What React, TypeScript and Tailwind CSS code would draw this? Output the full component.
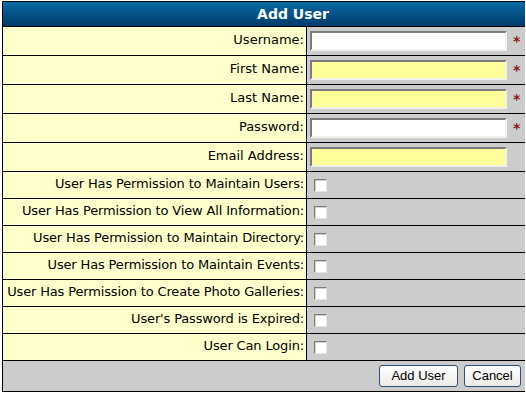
import React from 'react';

const textFields = [
  { label: 'Username:', yellow: false, required: true },
  { label: 'First Name:', yellow: true, required: true },
  { label: 'Last Name:', yellow: true, required: true },
  { label: 'Password:', yellow: false, required: true },
  { label: 'Email Address:', yellow: true, required: false },
];

const checkFields = [
  'User Has Permission to Maintain Users:',
  'User Has Permission to View All Information:',
  'User Has Permission to Maintain Directory:',
  'User Has Permission to Maintain Events:',
  'User Has Permission to Create Photo Galleries:',
  "User's Password is Expired:",
  'User Can Login:',
];

const App: React.FC = () => {
  return (
    <div className="w-[526px] h-[395px] bg-white pt-px pl-[2px] font-['DejaVu_Sans',sans-serif] text-[13px] text-black">
      <div className="w-[523px] grid grid-cols-[303px_218px] gap-px bg-black border border-black">
        {/* title */}
        <div className="col-span-2 h-[24px] flex items-center justify-center pl-[58px] bg-gradient-to-b from-[#0b6ba3] to-[#003b6b] text-white font-bold text-[14px]">
          Add User
        </div>

        {textFields.map((f) => (
          <React.Fragment key={f.label}>
            <div className="h-[28px] bg-[#ffffcc] flex items-center justify-end pr-[2px] pb-[3px] whitespace-nowrap">
              {f.label}
            </div>
            <div className="h-[28px] bg-[#cccccc] flex items-center pl-[3px]">
              <input
                type="text"
                className={`w-[197px] h-[20px] border-2 border-t-[#7b7b7b] border-l-[#7b7b7b] border-b-[#f2f2ec] border-r-[#f2f2ec] outline-none ${f.yellow ? 'bg-[#ffff99]' : 'bg-white'}`}
              />
              {f.required && (
                <span className="ml-[6px] text-[#8b1a1a] font-bold text-[14px] leading-none">*</span>
              )}
            </div>
          </React.Fragment>
        ))}

        {checkFields.map((label) => (
          <React.Fragment key={label}>
            <div className="h-[26px] bg-[#ffffcc] flex items-center justify-end pr-[2px] pb-[2px] whitespace-nowrap tracking-[-0.15px]">
              {label}
            </div>
            <div className="h-[26px] bg-[#cccccc] flex items-center pl-[7px]">
              <span className="block w-[13px] h-[13px] bg-white border border-t-[#7b7b7b] border-l-[#7b7b7b] border-b-[#e6e6e0] border-r-[#e6e6e0] shadow-[inset_1px_1px_0_#d4d0c8]" />
            </div>
          </React.Fragment>
        ))}

        <div className="col-span-2 h-[30px] bg-[#cccccc] flex items-center justify-end gap-[6px] pr-[4px] font-['Liberation_Sans',Arial,sans-serif] text-[13px]">
          <button className="w-[79px] h-[22px] rounded-[3px] border border-[#2c4f7c] bg-gradient-to-b from-white to-[#ecebe6]">
            Add User
          </button>
          <button className="w-[57px] h-[22px] rounded-[3px] border border-[#2c4f7c] bg-gradient-to-b from-white to-[#ecebe6]">
            Cancel
          </button>
        </div>
      </div>
    </div>
  );
};

export default App;
